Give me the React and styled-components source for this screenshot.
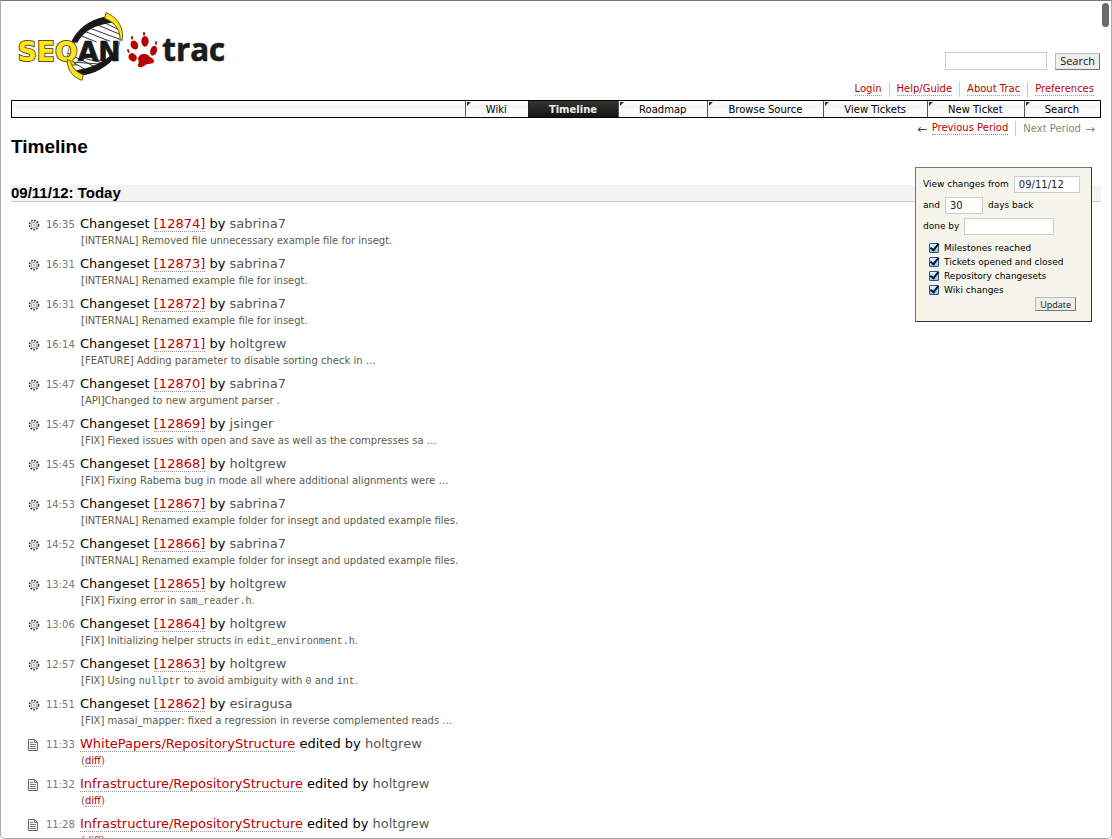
import React from 'react';
import styled, { createGlobalStyle, css } from 'styled-components';

const GlobalStyle = createGlobalStyle`
  *, *::before, *::after { box-sizing: border-box; }
  body {
    margin: 0;
    background: #fff;
    color: #000;
    font: 13px/18px "DejaVu Sans", Verdana, sans-serif;
  }
`;

const Window = styled.div`
  position: relative;
  height: 100vh;
  border: 1px solid #a9a9a9;
  border-top-color: #777;
  border-radius: 0 0 5px 5px;
  overflow: hidden;
`;

const Page = styled.div`
  height: 100%;
  padding: 0 10px;
  overflow-y: auto;
  scrollbar-width: none;
`;

const ScrollThumb = styled.div`
  position: absolute;
  top: 2px;
  right: 2px;
  width: 7px;
  height: 24px;
  border-radius: 4px;
  background: #6b6b6b;
`;

const Link = styled.a`
  color: #b00;
  text-decoration: none;
  border-bottom: 1px dotted #999;
`;

const Header = styled.header`
  display: flex;
  justify-content: space-between;
  align-items: flex-end;
  min-height: 99px;
`;

const LogoLink = styled.a`
  display: block;
  margin: 0 0 16px 5px;
  svg { display: block; }
`;

const HeaderTools = styled.div`
  display: flex;
  flex-direction: column;
  align-items: flex-end;
  gap: 12px;
  padding-bottom: 3px;
`;

const SearchForm = styled.form`
  display: flex;
  align-items: center;
  gap: 8px;
  padding-right: 1px;
`;

const TextInput = styled.input`
  width: ${(p) => p.$width}px;
  height: ${(p) => p.$height || 17}px;
  padding: 0 4px;
  border: 1px solid #ccc;
  border-radius: 0;
  background: #fff;
  color: #222;
  font: 10px "DejaVu Sans", Verdana, sans-serif;
  outline: none;
`;

const Button = styled.button`
  padding: 0 4px;
  border: 1px solid #bbb;
  border-right-color: #777;
  border-bottom-color: #777;
  background: #eee;
  color: #111;
  font-family: "Open Sans", "Lucida Grande", sans-serif;
  ${(p) =>
    p.$small
      ? css`font-size: 9px; line-height: 11px; height: 14px;`
      : css`font-size: 11px; line-height: 14px; height: 17px;`}
`;

const LinkBar = styled.ul`
  display: flex;
  justify-content: flex-end;
  margin: 0;
  padding: 0 7px 0 0;
  list-style: none;
  font-size: 10px;
  line-height: 12px;
  li { padding: 1px 0; color: #887; display: flex; align-items: center; }
  li + li { margin-left: 7px; padding-left: 7px; border-left: 1px solid #ccc; }
`;

const ContextBar = styled(LinkBar)`
  padding: 3px 6px 0 0;
`;

const Arrow = styled.span`
  margin: ${(p) => (p.$after ? '0 0 0 4px' : '0 4px 0 0')};
  color: ${(p) => (p.$after ? '#887' : '#444')};
  font-size: 12px;
`;

const MainNav = styled.nav`
  display: flex;
  justify-content: flex-end;
  height: 18px;
  border: 1px solid #000;
  background: linear-gradient(#fff 0%, #f3f3f3 30%, #fcfcfc 60%, #f8f8f8 100%);
`;

const NavItem = styled.a`
  position: relative;
  padding: 0 21px 0 20px;
  border-left: 1px solid #555;
  color: #000;
  font-size: 10px;
  line-height: 17px;
  text-decoration: none;
  white-space: nowrap;
  &::before {
    content: "";
    position: absolute;
    top: 1px;
    left: 1px;
    border-top: 4px solid #333;
    border-right: 4px solid transparent;
  }
  ${(p) =>
    p.$active &&
    css`
      border-left-color: #222;
      background: linear-gradient(#333631, #20221f 60%, #151714);
      color: #eee;
      font-weight: bold;
      &::before { display: none; }
    `}
`;

const Title = styled.h1`
  margin: 0;
  padding-bottom: 9px;
  font: bold 19px/22px "Liberation Sans", Arial, sans-serif;
`;

const DayHeading = styled.h2`
  margin: 18px 0 13px;
  border-bottom: 1px solid #ccc;
  background: #f4f4f4;
  font: bold 15px/16px "Liberation Sans", Arial, sans-serif;
`;

const FilterForm = styled.form`
  float: right;
  position: relative;
  width: 177px;
  margin-right: 9px;
  padding: 8px 7px 10px;
  border: 1px solid #776;
  border-right-color: #332;
  border-bottom-color: #332;
  background: #f5f5eb;
  font-size: 9px;
  line-height: 14px;
`;

const FilterLine = styled.div`
  display: flex;
  align-items: center;
  gap: 5px;
  margin-bottom: 4px;
  label { margin-top: -2px; }
`;

const CheckList = styled.fieldset`
  margin: 6px 0 0;
  padding: 0 0 0 6px;
  border: 0;
`;

const CheckLabel = styled.label`
  display: flex;
  align-items: center;
  gap: 5px;
  height: 14px;
`;

const CheckBox = styled.input`
  appearance: none;
  position: relative;
  width: 10px;
  height: 10px;
  margin: 0;
  border: 1px solid #33517f;
  border-radius: 1px;
  background: linear-gradient(#e8f3ff, #8fc1f2);
  &:checked::after {
    content: "";
    position: absolute;
    left: 2px;
    top: -2px;
    width: 5px;
    height: 9px;
    border: solid #0c1526;
    border-width: 0 2px 2px 0;
    transform: rotate(38deg);
  }
`;

const FormActions = styled.div`
  display: flex;
  justify-content: flex-end;
  padding-right: 8px;
`;

const EventList = styled.ul`
  margin: 0;
  padding: 0 0 0 17px;
  list-style: none;
`;

const Event = styled.li`
  display: grid;
  grid-template-columns: 18px 34px 1fr;
  height: 40px;
  svg { margin-top: 4px; }
`;

const Time = styled.time`
  color: #777;
  font-size: 10px;
  line-height: 20px;
`;

const Summary = styled.div`
  margin-bottom: 1px;
  line-height: 18px;
`;

const Author = styled.span`
  color: #555;
`;

const Description = styled.div`
  padding-left: 1px;
  color: #5c5c48;
  font-size: 10px;
  line-height: 14px;
  code { font: 10px/12px "Liberation Mono", "Courier New", monospace; }
`;

function Logo() {
  return (
    <svg width="210" height="74" viewBox="48 30 630 222" role="img" aria-label="SeqAn Trac">
      <path d="M222 124C240 92 272 66 322 58L362 86C366 128 350 172 310 196L238 222L206 190C196 166 206 140 222 124Z" fill="#fff" stroke="#444" strokeWidth="2" />
      <path d="M308 66L364 92M286 72L362 104M268 84L360 118M254 94L330 124M240 106L290 126M208 180L252 206M204 160L280 198M214 186L298 192M240 172L314 190M280 180L330 182" stroke="#333" strokeWidth="3" fill="none" />
      <path d="M212 128C232 86 266 60 313 50L336 68C284 74 250 94 232 128Z" fill="#181818" />
      <path d="M228 211C272 204 312 188 342 156L350 164C324 202 282 222 244 226Z" fill="#181818" />
      <path d="M318 38C350 50 374 82 366 122L360 116C360 88 344 66 314 55Z" fill="#ffe51e" stroke="#665c12" strokeWidth="3" />
      <g fontFamily="'DejaVu Sans', Verdana, sans-serif" fontWeight="bold" fontSize="80">
        <text x="53" y="183" fill="#ffe51e" stroke="#5e5618" strokeWidth="6" paintOrder="stroke">SEQ</text>
        <text x="233" y="183" fill="#181818" stroke="#181818" strokeWidth="2">AN</text>
      </g>
      <text x="487" y="183" fontFamily="'Open Sans', sans-serif" fontWeight="bold" fontSize="94" fill="#1c1c1c" stroke="#1c1c1c" strokeWidth="2">trac</text>
      <path d="M202 178C200 204 214 230 246 241L250 224C230 218 216 204 212 184Z" fill="#ffe51e" stroke="#665c12" strokeWidth="3" />
      <g fill="#b40000">
        <path d="M418 168C424 160 440 160 447 168C452 175 462 174 462 184C460 194 448 190 440 193C432 197 424 205 417 201C410 196 418 190 416 183C414 177 413 174 418 168Z" />
        <ellipse cx="403" cy="135" rx="11" ry="14" transform="rotate(-25 403 135)" />
        <ellipse cx="435" cy="124" rx="11" ry="16" />
        <ellipse cx="461" cy="152" rx="10" ry="15" transform="rotate(18 461 152)" />
        <ellipse cx="398" cy="172" rx="11" ry="13" transform="rotate(-45 398 172)" />
        <ellipse cx="396" cy="113" rx="3" ry="6" />
        <ellipse cx="432" cy="101" rx="3" ry="6" />
        <ellipse cx="468" cy="129" rx="3" ry="6" />
        <ellipse cx="385" cy="153" rx="3" ry="6" transform="rotate(-25 385 153)" />
      </g>
    </svg>
  );
}

function ChangesetIcon() {
  return (
    <svg width="12" height="12" viewBox="0 0 12 12" aria-hidden="true">
      <circle cx="6" cy="6" r="4.6" fill="#e4e4e4" stroke="#444" strokeWidth="1.6" strokeDasharray="1.8 1.2" />
      <circle cx="6" cy="6" r="2.6" fill="#fff" stroke="#999" strokeWidth="0.8" />
      <circle cx="6" cy="6" r="1" fill="#999" />
    </svg>
  );
}

function WikiIcon() {
  return (
    <svg width="12" height="13" viewBox="0 0 12 13" aria-hidden="true">
      <path d="M0.5 0.5H6.5L9.5 3.5V11.5H0.5Z" fill="#fafafa" stroke="#666" />
      <path d="M6.5 0.5V3.5H9.5M2 3.5H5M2 5.5H8M2 7.5H8M2 9.5H8" fill="none" stroke="#777" />
    </svg>
  );
}

const navItems = ['Wiki', 'Timeline', 'Roadmap', 'Browse Source', 'View Tickets', 'New Ticket', 'Search'];
const metaItems = ['Login', 'Help/Guide', 'About Trac', 'Preferences'];
const filters = ['Milestones reached', 'Tickets opened and closed', 'Repository changesets', 'Wiki changes'];

const changesets = [
  ['16:35', '12874', 'sabrina7', '[INTERNAL] Removed file unnecessary example file for insegt.'],
  ['16:31', '12873', 'sabrina7', '[INTERNAL] Renamed example file for insegt.'],
  ['16:31', '12872', 'sabrina7', '[INTERNAL] Renamed example file for insegt.'],
  ['16:14', '12871', 'holtgrew', '[FEATURE] Adding parameter to disable sorting check in …'],
  ['15:47', '12870', 'sabrina7', '[API]Changed to new argument parser .'],
  ['15:47', '12869', 'jsinger', '[FIX] Fiexed issues with open and save as well as the compresses sa …'],
  ['15:45', '12868', 'holtgrew', '[FIX] Fixing Rabema bug in mode all where additional alignments were …'],
  ['14:53', '12867', 'sabrina7', '[INTERNAL] Renamed example folder for insegt and updated example files.'],
  ['14:52', '12866', 'sabrina7', '[INTERNAL] Renamed example folder for insegt and updated example files.'],
  ['13:24', '12865', 'holtgrew', <>[FIX] Fixing error in <code>sam_reader.h</code>.</>],
  ['13:06', '12864', 'holtgrew', <>[FIX] Initializing helper structs in <code>edit_environment.h</code>.</>],
  ['12:57', '12863', 'holtgrew', <>[FIX] Using <code>nullptr</code> to avoid ambiguity with <code>0</code> and <code>int</code>.</>],
  ['11:51', '12862', 'esiragusa', '[FIX] masai_mapper: fixed a regression in reverse complemented reads …'],
];

const wikiEdits = [
  ['11:33', 'WhitePapers/RepositoryStructure', 'holtgrew'],
  ['11:32', 'Infrastructure/RepositoryStructure', 'holtgrew'],
  ['11:28', 'Infrastructure/RepositoryStructure', 'holtgrew'],
];

export default function App() {
  return (
    <Window>
      <GlobalStyle />
      <Page>
        <Header>
          <LogoLink href="#home"><Logo /></LogoLink>
          <HeaderTools>
            <SearchForm onSubmit={(e) => e.preventDefault()}>
              <TextInput type="text" aria-label="Search" $width={102} $height={18} />
              <Button type="submit">Search</Button>
            </SearchForm>
            <LinkBar>
              {metaItems.map((item) => (
                <li key={item}><Link href="#meta">{item}</Link></li>
              ))}
            </LinkBar>
          </HeaderTools>
        </Header>
        <MainNav>
          {navItems.map((item) => (
            <NavItem key={item} href="#nav" $active={item === 'Timeline'}>{item}</NavItem>
          ))}
        </MainNav>
        <ContextBar>
          <li><Arrow>←</Arrow><Link href="#previous">Previous Period</Link></li>
          <li>Next Period<Arrow $after>→</Arrow></li>
        </ContextBar>
        <main>
          <Title>Timeline</Title>
          <FilterForm onSubmit={(e) => e.preventDefault()}>
            <FilterLine>
              <label htmlFor="from">View changes from</label>
              <TextInput id="from" type="text" defaultValue="09/11/12" $width={66} />
            </FilterLine>
            <FilterLine>
              <label htmlFor="days">and</label>
              <TextInput id="days" type="text" defaultValue="30" $width={38} />
              <label htmlFor="days">days back</label>
            </FilterLine>
            <FilterLine>
              <label htmlFor="author">done by</label>
              <TextInput id="author" type="text" $width={90} />
            </FilterLine>
            <CheckList>
              {filters.map((name) => (
                <CheckLabel key={name}>
                  <CheckBox type="checkbox" defaultChecked />
                  {name}
                </CheckLabel>
              ))}
            </CheckList>
            <FormActions><Button type="submit" $small>Update</Button></FormActions>
          </FilterForm>
          <DayHeading>09/11/12: Today</DayHeading>
          <EventList>
            {changesets.map(([time, id, author, text]) => (
              <Event key={id}>
                <ChangesetIcon />
                <Time>{time}</Time>
                <div>
                  <Summary>Changeset <Link href="#changeset">[{id}]</Link> by <Author>{author}</Author></Summary>
                  <Description>{text}</Description>
                </div>
              </Event>
            ))}
            {wikiEdits.map(([time, page, author]) => (
              <Event key={time}>
                <WikiIcon />
                <Time>{time}</Time>
                <div>
                  <Summary><Link href="#wiki">{page}</Link> edited by <Author>{author}</Author></Summary>
                  <Description>(<Link href="#diff">diff</Link>)</Description>
                </div>
              </Event>
            ))}
          </EventList>
        </main>
      </Page>
      <ScrollThumb />
    </Window>
  );
}
